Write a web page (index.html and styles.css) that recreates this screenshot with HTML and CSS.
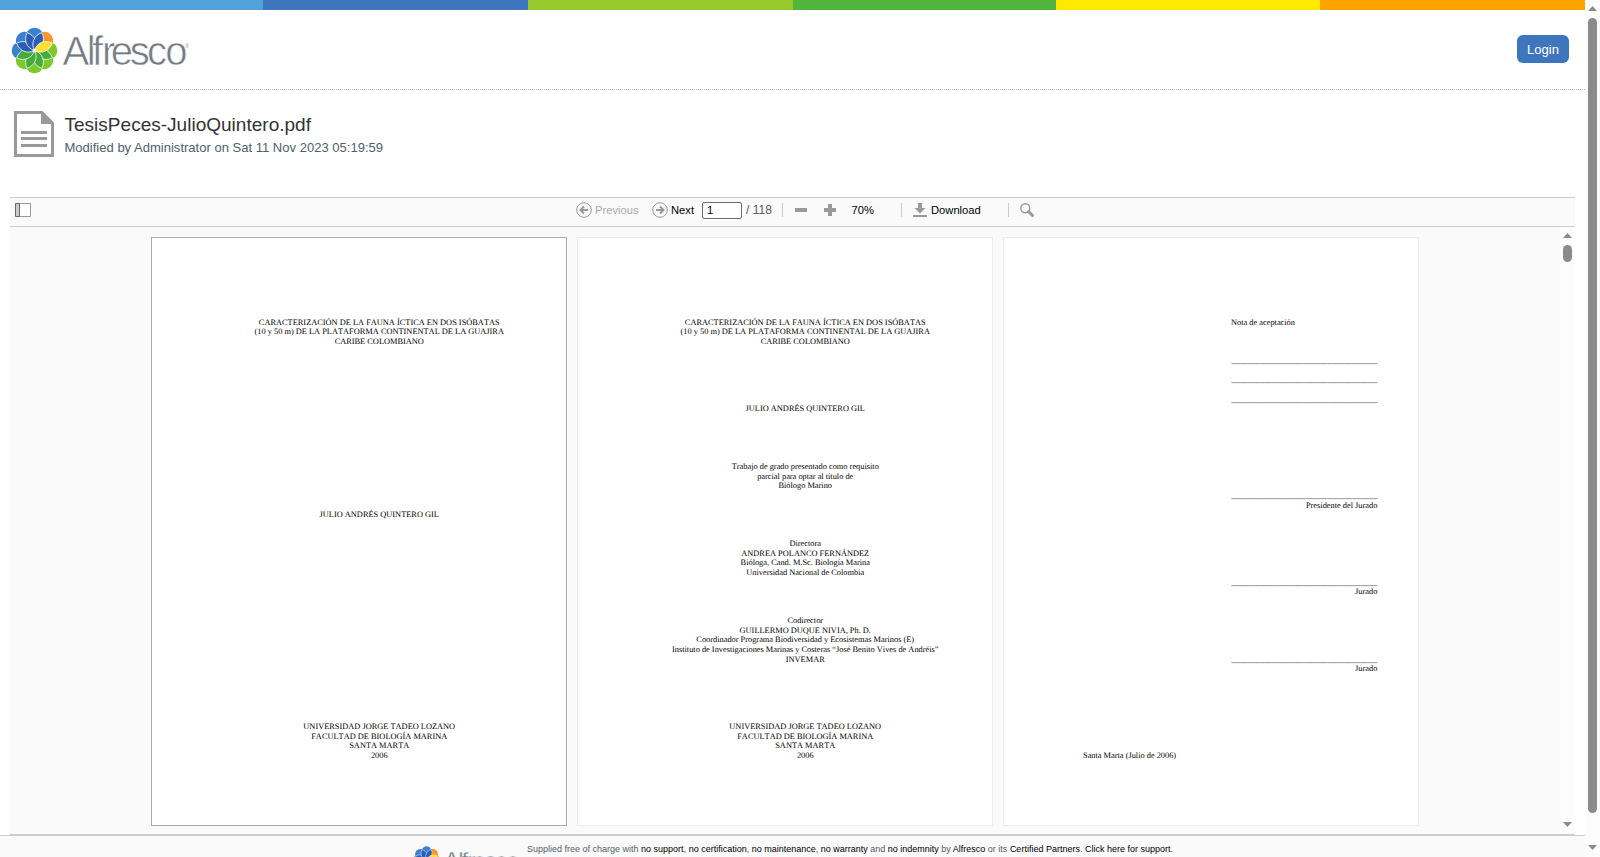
FILE: index.html
```
<!DOCTYPE html>
<html lang="en">
<head>
<meta charset="utf-8">
<title>Alfresco » TesisPeces-JulioQuintero.pdf</title>
<link rel="stylesheet" href="styles.css">
</head>
<body>
<svg width="0" height="0" class="defs" aria-hidden="true">
  <defs>
    <path id="lobe" d="M0 0L-7.400 -9.500A8.700 8.700 0 1 1 7.400 -9.500Z"/>
    <path id="lens" d="M0 0C-6.300 -5 -6.300 -14 0 -19.300C6.300 -14 6.300 -5 0 0Z"/>
    <g id="flower" transform="translate(23.500 23.500)">
      <g fill="#7ec82a">
        <use href="#lobe" transform="rotate(90)"/><use href="#lobe" transform="rotate(135)"/>
        <use href="#lobe" transform="rotate(180)"/><use href="#lobe" transform="rotate(225)"/>
      </g>
      <use href="#lobe" transform="rotate(45)" fill="#f9952b"/>
      <g fill="#3a82cf">
        <use href="#lobe" transform="rotate(-90)"/><use href="#lobe" transform="rotate(-45)"/><use href="#lobe"/>
      </g>
      <g stroke="#fff" stroke-width=".7">
        <g fill="#45ab3c">
          <use href="#lens" transform="rotate(112.500)"/><use href="#lens" transform="rotate(157.500)"/>
          <use href="#lens" transform="rotate(202.500)"/><use href="#lens" transform="rotate(247.500)"/>
        </g>
        <g fill="#2b5db4">
          <use href="#lens" transform="rotate(-67.500)"/><use href="#lens" transform="rotate(-22.500)"/><use href="#lens" transform="rotate(22.500)"/>
        </g>
        <use href="#lens" transform="rotate(67.500)" fill="#fde12d"/>
      </g>
      <circle r="1.800" fill="#fff"/>
    </g>
  </defs>
</svg>
<div class="window">
  <main class="site">
    <div class="stripe"><i></i><i></i><i></i><i></i><i></i><i></i></div>
    <header class="header">
      <svg class="logo" width="190" height="50" viewBox="0 0 190 50">
        <use href="#flower"/>
        <text x="51.400 75.800 81 90.900 99.800 118.800 136 154.300" y="37.900" class="wordmark">Alfresco</text>
        <text x="174.300" y="20.500" class="reg">®</text>
      </svg>
      <a class="login">Login</a>
    </header>
    <section class="node">
      <svg class="doc" width="40" height="46" viewBox="0 0 40 46">
        <path fill="#999" fill-rule="evenodd" d="M0 0H28.500L40 11.500V46H0ZM3 3V43H37V13H27V3Z"/>
        <path fill="#999" d="M7 20h26v3H7zM7 26h26v3H7zM7 33h26v3H7z"/>
      </svg>
      <div>
        <h1>TesisPeces-JulioQuintero.pdf</h1>
        <p>Modified by Administrator on Sat 11 Nov 2023 05:19:59</p>
      </div>
    </section>
    <section class="previewer">
      <div class="toolbar">
        <svg class="sidebar-icon" width="16" height="14" viewBox="0 0 16 14"><path d="M4.500 .5h11v13h-11z" fill="#fff" stroke="#999"/><path d="M.5 .5h4v13h-4z" fill="#ccc" stroke="#666"/></svg>
        <div class="controls">
          <svg class="circle" width="16" height="16" viewBox="0 0 16 16"><circle cx="8" cy="8" r="7.300" fill="none" stroke="#999"/><path d="M12 8H5M8 4.500L4.500 8L8 11.500" fill="none" stroke="#999" stroke-width="2"/></svg>
          <span class="prev">Previous</span>
          <svg class="circle" width="16" height="16" viewBox="0 0 16 16"><circle cx="8" cy="8" r="7.300" fill="none" stroke="#999"/><path d="M4 8H11M8 4.500L11.500 8L8 11.500" fill="none" stroke="#999" stroke-width="2"/></svg>
          <span class="next">Next</span>
          <span class="field">1</span>
          <span class="count">/ 118</span>
          <i class="sep"></i>
          <svg class="minus" width="12" height="12" viewBox="0 0 12 12"><path d="M0 4h12v4H0z" fill="#999"/></svg>
          <svg class="plus" width="12" height="12" viewBox="0 0 12 12"><path d="M0 4h4V0h4v4h4v4H8v4H4V8H0z" fill="#999"/></svg>
          <span class="zoom">70%</span>
          <i class="sep"></i>
          <svg class="down" width="14" height="14" viewBox="0 0 14 14"><path d="M5 0h4v5h3.500L7 10.500 1.500 5H5zM0 12h14v2H0z" fill="#999"/></svg>
          <span class="download">Download</span>
          <i class="sep"></i>
          <svg class="search" width="15" height="15" viewBox="0 0 15 15"><circle cx="5.300" cy="5.300" r="4.500" fill="none" stroke="#999" stroke-width="1.400"/><path d="M8.500 8.500L12.500 12.500" stroke="#999" stroke-width="3" stroke-linecap="round"/></svg>
        </div>
      </div>
      <div class="viewer">
        <div class="pages">
<pre class="page current">CARACTERIZACIÓN DE LA FAUNA ÍCTICA EN DOS ISÓBATAS
(10 y 50 m) DE LA PLATAFORMA CONTINENTAL DE LA GUAJIRA
CARIBE COLOMBIANO

















JULIO ANDRÉS QUINTERO GIL





















UNIVERSIDAD JORGE TADEO LOZANO
FACULTAD DE BIOLOGÍA MARINA
SANTA MARTA
2006</pre>
<pre class="page">CARACTERIZACIÓN DE LA FAUNA ÍCTICA EN DOS ISÓBATAS
(10 y 50 m) DE LA PLATAFORMA CONTINENTAL DE LA GUAJIRA
CARIBE COLOMBIANO






JULIO ANDRÉS QUINTERO GIL





Trabajo de grado presentado como requisito
parcial para optar al título de
Biólogo Marino





Directora
ANDREA POLANCO FERNÁNDEZ
Bióloga, Cand. M.Sc. Biología Marina
Universidad Nacional de Colombia




Codirector
GUILLERMO DUQUE NIVIA, Ph. D.
Coordinador Programa Biodiversidad y Ecosistemas Marinos (E)
Instituto de Investigaciones Marinas y Costeras “José Benito Vives de Andréis”
INVEMAR






UNIVERSIDAD JORGE TADEO LOZANO
FACULTAD DE BIOLOGÍA MARINA
SANTA MARTA
2006</pre>
<pre class="page right"><span class="note">Nota de aceptación</span>



___________________________________

___________________________________

___________________________________









___________________________________
Presidente del Jurado







___________________________________
Jurado






___________________________________
Jurado








<span class="place">Santa Marta (Julio de 2006)</span></pre>
        </div>
        <div class="scrollbar inner"><b class="up"></b><b class="thumb"></b><b class="dn"></b></div>
      </div>
    </section>
    <footer class="footer">
      <svg class="footlogo" width="113" height="30" viewBox="0 0 184 49">
        <use href="#flower"/>
        <text x="51.200 75.300 80.500 90.200 99 118 135 153.400" y="37.900" class="wordmark">Alfresco</text>
      </svg>
      <p>Supplied free of charge with <a>no support</a>, <a>no certification</a>, <a>no maintenance</a>, <a>no warranty</a> and <a>no indemnity</a> by <a>Alfresco</a> or its <a>Certified Partners</a>. <a>Click here for support</a>.</p>
    </footer>
  </main>
  <div class="scrollbar outer"><b class="up"></b><b class="thumb"></b><b class="dn"></b></div>
</div>
</body>
</html>
```
FILE: styles.css
```
* { box-sizing: border-box; }
body { margin: 0; background: #fff; font-family: "Liberation Sans", Arial, sans-serif; font-size: 13px; color: #515d6b; overflow: hidden; }
.defs { position: absolute; }
svg { display: block; flex: none; }
.window { display: flex; width: 1600px; height: 857px; overflow: hidden; }
.site { width: 1585px; display: flex; flex-direction: column; overflow: hidden; }

.stripe { display: flex; height: 10px; flex: none; }
.stripe i { flex: 265; }
.stripe i:nth-child(1) { background: #52a2da; flex: 263; }
.stripe i:nth-child(2) { background: #3e76bd; }
.stripe i:nth-child(3) { background: #98c92c; }
.stripe i:nth-child(4) { background: #4fb53c; flex: 263; }
.stripe i:nth-child(5) { background: #ffe900; flex: 264; }
.stripe i:nth-child(6) { background: #fca300; }

.header { height: 80px; flex: none; display: flex; justify-content: space-between; align-items: flex-start; padding: 17px 16px 0 11px; border-bottom: 1px dotted #bbb; }
.logo { overflow: visible; }
.wordmark { font: 40px "Liberation Sans", Arial, sans-serif; fill: #747b83; stroke: #fff; stroke-width: .6px; }
.reg { font: 5px "Liberation Sans", Arial, sans-serif; fill: #888; }
.login { margin-top: 8px; width: 52px; height: 28px; border-radius: 6px; background: #3e76bd; color: #fff; text-align: center; line-height: 29px; }

.node { height: 107px; flex: none; display: flex; padding: 21px 0 0 14px; gap: 10.500px; }
.node h1 { margin: 3px 0 0; font-size: 19.040px; line-height: 22px; font-weight: 400; color: #333; }
.node p { margin: 4px 0 0; font-size: 13.040px; line-height: 16px; }

.previewer { margin: 0 10px; height: 638px; flex: none; border-top: 1px solid #ccc; border-bottom: 1px solid #ccc; background: #fafafa; display: flex; flex-direction: column; }
.toolbar { height: 29px; display: flex; padding-left: 5px; border-bottom: 1px solid #ccc; flex: none; }
.sidebar-icon { margin-top: 5px; }
.controls { display: flex; align-items: center; height: 24px; margin-left: 545px; font-size: 11.200px; color: #000; }
.prev { width: 57px; margin-left: 3px; color: #aaa; }
.next { width: 31px; margin-left: 3px; }
.field { width: 40px; height: 17px; border: 1px solid #6b6b6b; border-radius: 2px; background: #fff; padding-left: 4px; line-height: 15px; }
.count { margin-left: 4px; width: 36px; font-size: 12px; color: #515d6b; }
.sep { width: 1px; height: 14px; background: #ccc; }
.minus { margin-left: 12px; }
.plus { margin-left: 17px; }
.zoom { width: 50px; margin-left: 15px; padding-left: .5px; }
.down { margin-left: 11px; }
.download { width: 77px; margin-left: 4px; }
.search { margin-left: 11px; }

.viewer { flex: 1; display: flex; min-height: 0; }
.pages { flex: 1; display: flex; gap: 10px; padding: 10px 0 0 141px; }
.page { margin: 0; width: 416px; height: 589px; flex: none; background: #fff; border: 1px solid #ebebeb; padding: 79.700px 38.500px 0 79px; font: 8.360px/9.625px "Liberation Serif", "Times New Roman", serif; color: #000; text-align: center; white-space: pre; font-kerning: none; text-rendering: geometricPrecision; }
.page.current { border-color: #aaa; }
.page.right { text-align: right; padding-right: 40.700px; }
.note { display: inline-block; width: 146.300px; text-align: left; }
.place { display: inline-block; width: 100%; text-align: left; }

.scrollbar { width: 15px; flex: none; background: #fcfcfc; display: flex; flex-direction: column; align-items: flex-start; padding: 6px 0 0 3px; }
.up, .dn { width: 9px; height: 5px; background: #8b8b8b; clip-path: polygon(50% 0, 100% 100%, 0 100%); }
.dn { clip-path: polygon(0 0, 100% 0, 50% 100%); }
.thumb { width: 9px; border-radius: 4.500px; background: #8b8b8b; margin-top: 7px; }
.inner .thumb { height: 17px; }
.inner .dn { margin-top: 560px; }
.outer .thumb { height: 795px; }
.outer .dn { margin-top: 32px; }

.footer { flex: 1; border-top: 1px solid #ccc; background: #fafafa; display: flex; overflow: hidden; padding-left: 412px; font-size: 9px; }
.footlogo { margin-top: 10px; }
.footer p { margin: 7px 0 0 2px; line-height: 12px; white-space: nowrap; }
.footer a { color: #000; }
```
